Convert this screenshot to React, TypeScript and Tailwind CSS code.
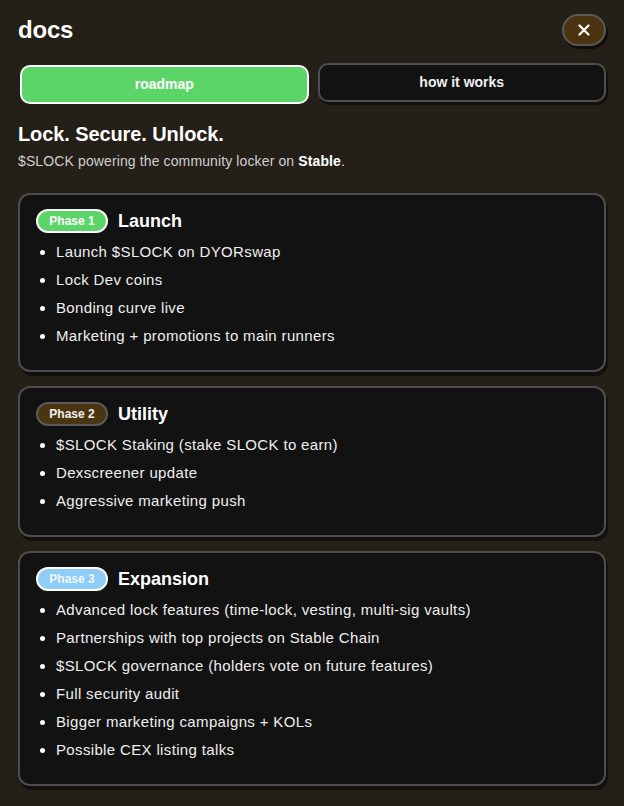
import React from "react"

interface Phase {
  label: string
  title: string
  badge: string
  items: string[]
}

const phases: Phase[] = [
  {
    label: "Phase 1",
    title: "Launch",
    badge: "bg-[#5cd568] border-white text-white",
    items: [
      "Launch $SLOCK on DYORswap",
      "Lock Dev coins",
      "Bonding curve live",
      "Marketing + promotions to main runners",
    ],
  },
  {
    label: "Phase 2",
    title: "Utility",
    badge: "bg-[#4a3510] border-[#5a5a5a] text-[#f0f0f0]",
    items: [
      "$SLOCK Staking (stake SLOCK to earn)",
      "Dexscreener update",
      "Aggressive marketing push",
    ],
  },
  {
    label: "Phase 3",
    title: "Expansion",
    badge: "bg-[#8fcdf6] border-white text-[#eef7fd]",
    items: [
      "Advanced lock features (time-lock, vesting, multi-sig vaults)",
      "Partnerships with top projects on Stable Chain",
      "$SLOCK governance (holders vote on future features)",
      "Full security audit",
      "Bigger marketing campaigns + KOLs",
      "Possible CEX listing talks",
    ],
  },
]

export default function App() {
  return (
    <div className="min-h-screen bg-[#241f17] px-[18px] pt-[14px] pb-[20px] text-white font-['Liberation_Sans',Arial,sans-serif]">
      {/* header */}
      <div className="flex items-center justify-between h-[32px]">
        <h1 className="text-[24px] font-semibold leading-none tracking-[-0.2px]">docs</h1>
        <button className="w-[44px] h-[32px] rounded-full bg-[#4a3510] border-2 border-[#5a5a5a] shadow-[2px_3px_0_rgba(0,0,0,0.55)] flex items-center justify-center">
          <svg width="12" height="12" viewBox="0 0 12 12">
            <path d="M1.5 1.5L10.5 10.5M10.5 1.5L1.5 10.5" stroke="white" strokeWidth="2.2" strokeLinecap="round" />
          </svg>
        </button>
      </div>

      {/* tabs */}
      <div className="grid grid-cols-2 gap-[11px] mt-[17px]">
        <button className="h-[39px] rounded-[10px] bg-[#5cd568] border-2 border-white text-[14px] font-bold text-white translate-x-[2px] translate-y-[2px]">
          roadmap
        </button>
        <button className="h-[39px] rounded-[10px] bg-[#121212] border-2 border-[#4f4f4f] text-[14px] font-bold text-[#f0f0f0] shadow-[2px_3px_0_rgba(0,0,0,0.5)]">
          how it works
        </button>
      </div>

      <h2 className="mt-[18px] text-[20px] font-bold leading-[28px] tracking-[-0.1px]">Lock. Secure. Unlock.</h2>
      <p className="mt-[3px] text-[14px] leading-[20px] text-[#cfcfcf] tracking-[0.12px]">
        $SLOCK powering the community locker on <span className="font-bold text-white">Stable</span>.
      </p>

      <div className="mt-[22px] flex flex-col gap-[14px]">
        {phases.map((p) => (
          <div
            key={p.label}
            className="bg-[#121212] border-2 border-[#4d4d4d] rounded-[12px] px-[16px] pt-[12px] pb-[23px] shadow-[2px_4px_0_rgba(0,0,0,0.45)]"
          >
            <div className="flex items-center gap-[10px] h-[28px]">
              <span
                className={`h-[24px] w-[72px] rounded-full border-2 flex items-center justify-center text-[12px] font-bold ${p.badge}`}
              >
                {p.label}
              </span>
              <span className="text-[18px] font-bold leading-[28px]">{p.title}</span>
            </div>
            <ul className="mt-[6px] list-disc pl-[20px] flex flex-col gap-[6px] text-[15px] leading-[22px] text-[#efefef] tracking-[0.35px] marker:text-white">
              {p.items.map((it) => (
                <li key={it}>{it}</li>
              ))}
            </ul>
          </div>
        ))}
      </div>
    </div>
  )
}
